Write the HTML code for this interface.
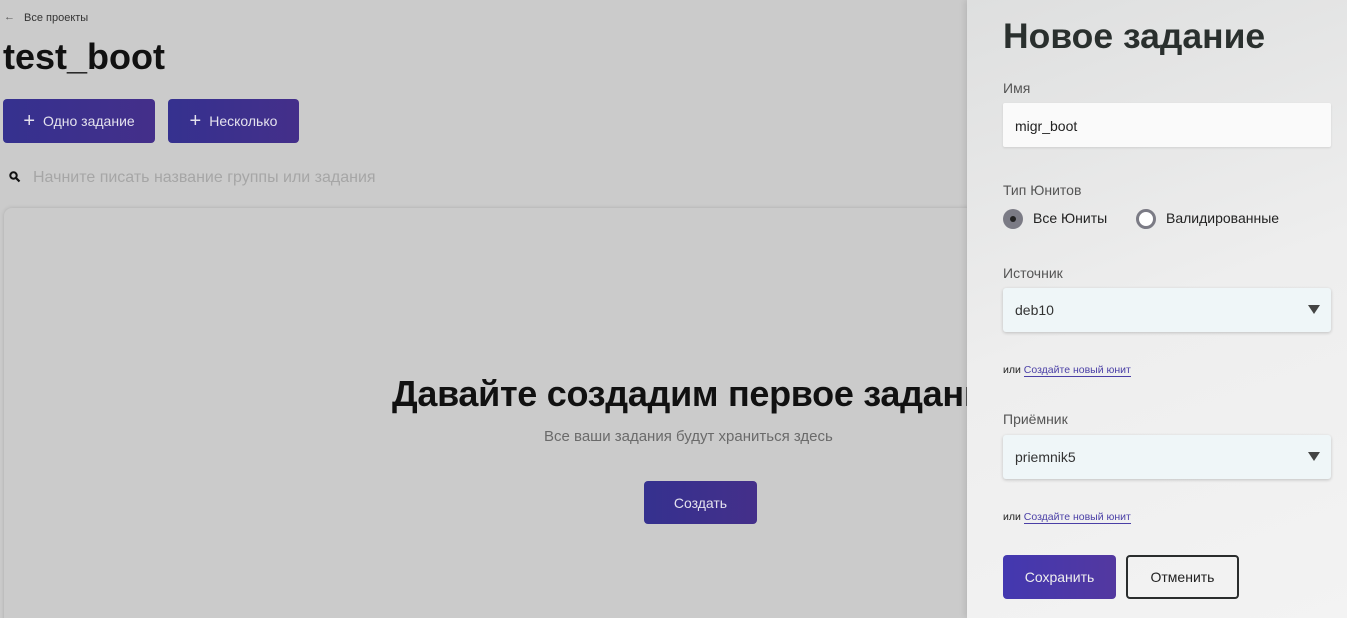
<!DOCTYPE html>
<html style="overflow:hidden;width:1347px;height:618px"><head><meta charset="utf-8"><style>
*{box-sizing:border-box;margin:0;padding:0}
body{width:1347px;height:618px;overflow:hidden;background:#cbcbcb;font-family:"Liberation Sans",sans-serif;position:relative}
.abs{position:absolute}
.btn{position:absolute;background:linear-gradient(90deg,#35318f,#442f8a);color:#e4e2ee;border-radius:4px;font-size:14px;display:flex;align-items:center;justify-content:center}
.panel{position:absolute;left:967px;top:0;width:380px;height:618px;background:linear-gradient(160deg,#dedfdf,#eeeeee 50%,#f3f3f3);box-shadow:-2px 0 6px rgba(0,0,0,.1)}
.lbl{position:absolute;left:36px;font-size:14px;color:#555}
.sel{position:absolute;left:36px;width:292px;height:44px;background:#eff6f8;border-radius:3px;box-shadow:0 1px 3px rgba(0,0,0,.2);font-size:14px;color:#333;padding:14px 0 0 12px}
.sel:after{content:"";position:absolute;right:11px;top:17px;border-left:6px solid transparent;border-right:6px solid transparent;border-top:9px solid #444}
.or{position:absolute;left:36px;font-size:10.5px;color:#222}
.or span{color:#4a3fa6;border-bottom:1px solid #4a3fa6}
</style></head><body>
<div class="abs" style="left:0;top:0;width:1347px;height:618px;overflow:hidden">
<div class="abs" style="left:4px;top:11px;font-size:11px;color:#555">← </div>
<div class="abs" style="left:24px;top:12px;font-size:11px;color:#333">Все проекты</div>
<div class="abs" style="left:3px;top:36px;font-size:36px;font-weight:bold;color:#111">test_boot</div>
<div class="btn" style="left:3px;top:99px;width:152px;height:44px"><span style="font-size:20px;margin-right:8px">+</span>Одно задание</div>
<div class="btn" style="left:168px;top:99px;width:131px;height:44px"><span style="font-size:20px;margin-right:8px">+</span>Несколько</div>
<svg class="abs" style="left:9px;top:171px" width="12" height="12" viewBox="0 0 12 12"><circle cx="4.5" cy="4.5" r="3.2" fill="none" stroke="#111" stroke-width="2"/><line x1="7" y1="7" x2="10.5" y2="10.5" stroke="#111" stroke-width="2.2"/></svg>
<div class="abs" style="left:33px;top:169px;font-size:16px;color:#a6a6a6">Начните писать название группы или задания</div>
<div class="abs" style="left:4px;top:208px;width:1400px;height:420px;border-radius:8px;background:#cbcbcb;box-shadow:0 0 4px rgba(0,0,0,.15)"></div>
<div class="abs" style="left:392px;top:373px;font-size:36px;font-weight:bold;color:#111;white-space:nowrap;letter-spacing:-0.3px">Давайте создадим первое задание</div>
<div class="abs" style="left:544px;top:428px;font-size:15px;color:#6a6a6a">Все ваши задания будут храниться здесь</div>
<div class="btn" style="left:644px;top:481px;width:113px;height:43px">Создать</div>
<div class="panel">
<div class="abs" style="left:36px;top:16px;font-size:35.5px;font-weight:bold;color:#2a302e">Новое задание</div>
<div class="lbl" style="top:80px">Имя</div>
<div class="abs" style="left:36px;top:103px;width:328px;height:44px;background:#fafafa;border-radius:2px;box-shadow:0 1px 2px rgba(0,0,0,.1);font-size:14px;color:#222;padding:15px 0 0 12px">migr_boot</div>
<div class="lbl" style="top:182px">Тип Юнитов</div>
<div class="abs" style="left:36px;top:209px;width:20px;height:20px;border-radius:50%;background:#7b7b85"><div style="position:absolute;left:7px;top:7px;width:6px;height:6px;border-radius:50%;background:#222"></div></div>
<div class="abs" style="left:66px;top:210px;font-size:14px;color:#222">Все Юниты</div>
<div class="abs" style="left:169px;top:209px;width:20px;height:20px;border-radius:50%;background:#fff;border:3px solid #7b7b85"></div>
<div class="abs" style="left:199px;top:210px;font-size:14px;color:#222">Валидированные</div>
<div class="lbl" style="top:265px">Источник</div>
<div class="sel" style="top:288px;width:328px">deb10</div>
<div class="or" style="top:364px">или <span>Создайте новый юнит</span></div>
<div class="lbl" style="top:411px">Приёмник</div>
<div class="sel" style="top:435px;width:328px">priemnik5</div>
<div class="or" style="top:511px">или <span>Создайте новый юнит</span></div>
<div class="btn" style="left:36px;top:555px;width:113px;height:44px;background:linear-gradient(90deg,#4338b0,#5338a0);color:#eee">Сохранить</div>
<div class="abs" style="left:159px;top:555px;width:113px;height:44px;border:2px solid #2a2d2d;border-radius:4px;font-size:14px;color:#222;display:flex;align-items:center;justify-content:center">Отменить</div>
</div>
</div>
</body></html>
